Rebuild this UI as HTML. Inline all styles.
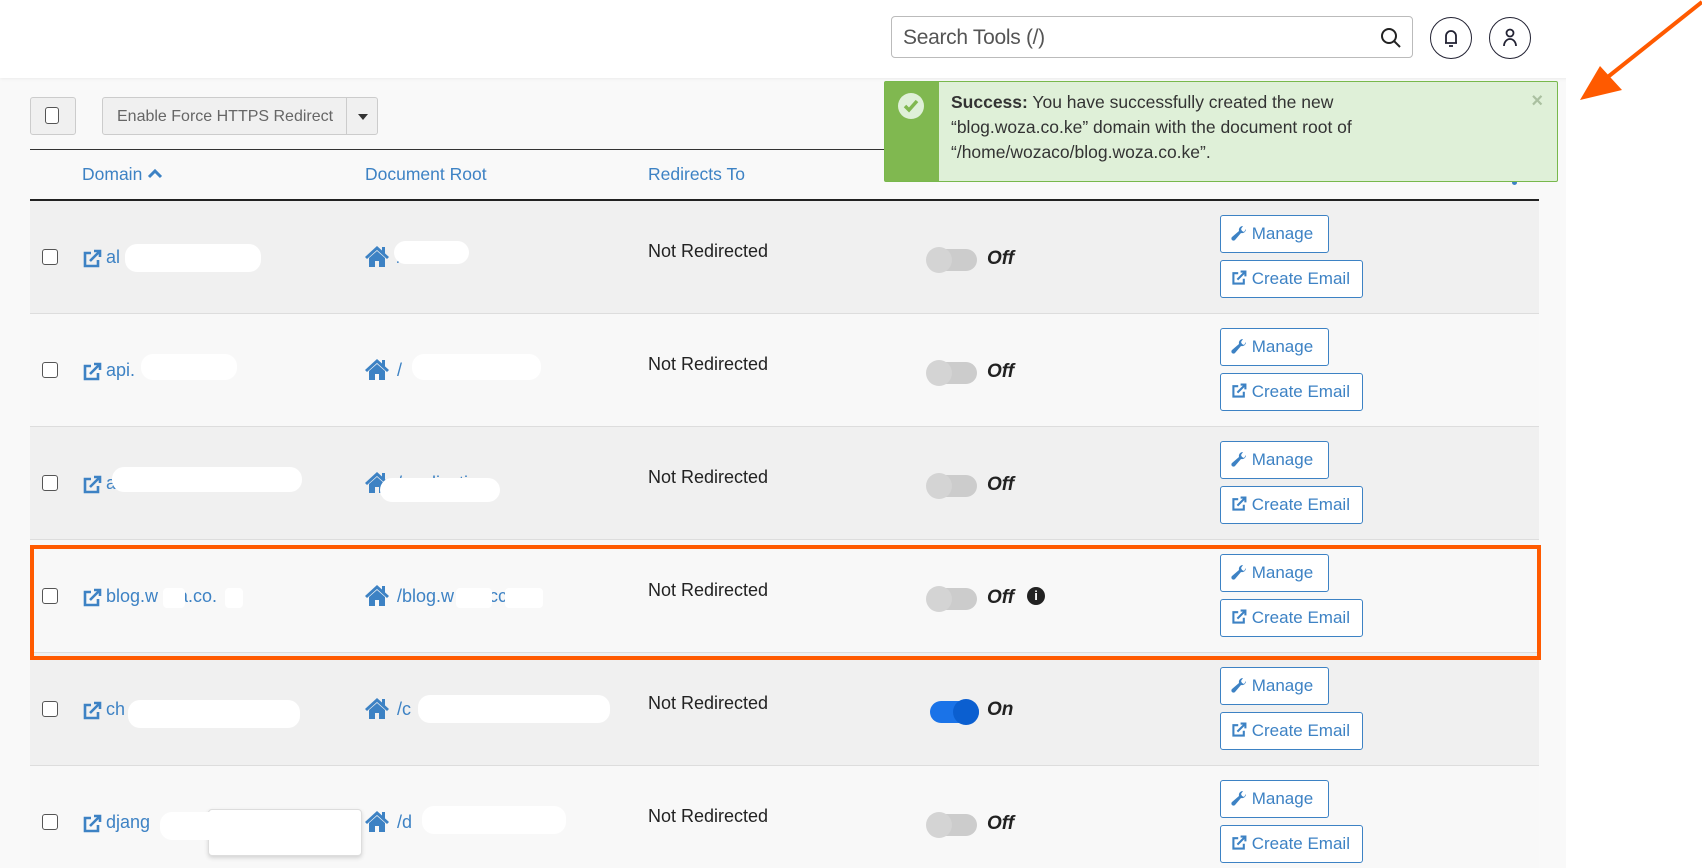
<!DOCTYPE html>
<html><head><meta charset="utf-8"><style>
*{box-sizing:border-box;margin:0;padding:0}
body{width:1702px;height:868px;overflow:hidden;background:#f9f9f9;font-family:"Liberation Sans",sans-serif;position:relative;color:#222}
.a{position:absolute}
.hdr{left:0;top:0;width:1702px;height:78px;background:#fff;box-shadow:0 1px 3px rgba(0,0,0,.06)}
.rw{left:1566px;top:78px;width:136px;height:790px;background:#fff}
.search{left:891px;top:16px;width:522px;height:42px;border:1px solid #bbb;border-radius:4px;background:#fff;font-size:21px;color:#555;padding:9px 11px;letter-spacing:-.3px}
.circ{width:42px;height:42px;border:1.5px solid #223;border-radius:50%;background:#fff}
.btn{background:#f0f0f0;border:1px solid #ccc;border-radius:3px}
.th{font-size:17.5px;color:#3d82c4;top:164px}
.row{left:30px;width:1509px;height:113px;border-bottom:1px solid #ddd}
.cb{width:16px;height:16px;border:1.5px solid #555;border-radius:3px;background:#fff}
.lnk{font-size:18px;color:#3d82c4}
.nr{font-size:18px;color:#222}
.tg{width:49px;height:22px;border-radius:11px;background:#ccc}
.tg i{position:absolute;left:-2px;top:-2px;width:26px;height:26px;border-radius:50%;background:#d4d4d4}
.off{font-size:19px;font-weight:bold;font-style:italic;color:#222}
.ob{background:#fff;border:1px solid #3d82c4;border-radius:3px;font-size:17px;color:#3d82c4;padding:8px 0 0 10px;height:38px}
.blob{background:#fff;border-radius:12px}
</style></head><body>
<div class="a hdr"></div>
<div class="a rw"></div>
<div class="a search">Search Tools (/)
<svg class="a" style="right:10px;top:10px" width="22" height="22" viewBox="0 0 22 22"><circle cx="9" cy="9" r="7" fill="none" stroke="#222" stroke-width="2"/><path d="M14 14l6 6" stroke="#222" stroke-width="2"/></svg></div>
<div class="a circ" style="left:1430px;top:17px"><svg width="40" height="40" viewBox="0 0 40 40"><path d="M14 25h12M15 25v-7a5 5 0 0110 0v7M18 28h4" fill="none" stroke="#223" stroke-width="1.8"/></svg></div>
<div class="a circ" style="left:1489px;top:17px"><svg width="40" height="40" viewBox="0 0 40 40"><circle cx="20" cy="15" r="3.5" fill="none" stroke="#223" stroke-width="1.8"/><path d="M14 28a6 7 0 0112 0" fill="none" stroke="#223" stroke-width="1.8"/></svg></div>

<div class="a btn" style="left:30px;top:97px;width:46px;height:38px"><div class="a cb" style="left:14px;top:9px;width:14px;height:17px"></div></div>
<div class="a btn" style="left:102px;top:97px;width:276px;height:38px;font-size:16px;color:#666;padding:10px 0 0 14px">Enable Force HTTPS Redirect
<div class="a" style="left:243px;top:0;width:1px;height:36px;background:#ccc"></div>
<div class="a" style="left:255px;top:16px;border:5px solid transparent;border-top:6px solid #333"></div></div>

<div class="a" style="left:30px;top:149px;width:1509px;height:1px;background:#333"></div>
<div class="a th" style="left:82px">Domain <svg width="16" height="12" style="vertical-align:1px"><path d="M2 10l6-6 6 6" fill="none" stroke="#3d82c4" stroke-width="3"/></svg></div>
<div class="a th" style="left:365px">Document Root</div>
<div class="a th" style="left:648px">Redirects To</div>
<div class="a" style="left:1512px;top:180px;width:5px;height:5px;border-radius:50%;background:#3d82c4"></div>
<div class="a" style="left:30px;top:199px;width:1509px;height:2px;background:#222"></div>

<div class="a row" style="top:201px;background:#f0f0f0"></div>
<div class="a row" style="top:314px;background:#f8f8f8"></div>
<div class="a row" style="top:427px;background:#f0f0f0"></div>
<div class="a row" style="top:540px;background:#f8f8f8"></div>
<div class="a row" style="top:653px;background:#f0f0f0"></div>
<div class="a row" style="top:766px;background:#f8f8f8;border:none;height:102px"></div>

<svg width="0" height="0" style="position:absolute"><defs>
<symbol id="ext" viewBox="0 0 20 20"><path d="M9 4H3v13h13v-6" fill="none" stroke="#3d82c4" stroke-width="2.6"/><path d="M8 12l9-9M12 2h6v6" fill="none" stroke="#3d82c4" stroke-width="2.6"/></symbol>
<symbol id="home" viewBox="0 0 26 24"><path d="M13 2L1 13l2 2 10-9 10 9 2-2-4-3.6V3h-3v3.5z" fill="#3d82c4"/><path d="M5 14l8-7 8 7v9h-6v-6h-4v6H5z" fill="#3d82c4"/></symbol>
<symbol id="wr" viewBox="0 0 16 16"><path d="M15 4a4 4 0 01-5 4L4 15a1.6 1.6 0 01-3-3l7-6a4 4 0 014-5l-2 3 1 2 2 1z" fill="#3d82c4"/></symbol>
</defs></svg>

<div id="rows"></div>
<script>
var tops=[201,314,427,540,653,766];
var dom=["al","api.","a","blog.w&nbsp;&nbsp;&nbsp;&nbsp;a.co.","ch","djang"];
var root=["/","/","/applicatio","/blog.w&nbsp;&nbsp;&nbsp;&nbsp;a.cc","/c","/d"];
var h="";
tops.forEach(function(t,i){
h+='<div class="a cb" style="left:42px;top:'+(t+48)+'px"></div>';
h+='<svg class="a" style="left:82px;top:'+(t+48)+'px" width="20" height="20"><use href="#ext"/></svg>';
h+='<div class="a lnk" style="left:106px;top:'+(t+46)+'px">'+dom[i]+'</div>';
h+='<svg class="a" style="left:364px;top:'+(t+43)+'px" width="26" height="24"><use href="#home"/></svg>';
h+='<div class="a lnk" style="left:397px;top:'+(t+46)+'px">'+root[i]+'</div>';
h+='<div class="a nr" style="left:648px;top:'+(t+40)+'px">Not Redirected</div>';
if(i==4){h+='<div class="a tg" style="left:930px;top:'+(t+48)+'px;background:#1a73e8"><i style="left:23px;background:#0b5fd0"></i></div><div class="a off" style="left:987px;top:'+(t+46)+'px">On</div>';}
else{h+='<div class="a tg" style="left:928px;top:'+(t+48)+'px"><i></i></div><div class="a off" style="left:987px;top:'+(t+47)+'px">Off</div>';}
h+='<div class="a ob" style="left:1220px;top:'+(t+14)+'px;width:109px"><svg width="16" height="16" style="vertical-align:-2px"><use href="#wr"/></svg> Manage</div>';
h+='<div class="a ob" style="left:1220px;top:'+(t+59)+'px;width:143px"><svg width="16" height="16" style="vertical-align:-2px"><use href="#ext"/></svg> Create Email</div>';
});
document.getElementById("rows").innerHTML=h;
</script>
<div class="a" style="left:1027px;top:587px;width:18px;height:18px;border-radius:50%;background:#222;color:#fff;font-size:13px;font-weight:bold;text-align:center;line-height:18px">i</div>

<div class="a blob" style="left:125px;top:244px;width:136px;height:28px"></div>
<div class="a blob" style="left:394px;top:241px;width:75px;height:23px"></div>
<div class="a blob" style="left:141px;top:354px;width:96px;height:26px"></div>
<div class="a blob" style="left:412px;top:354px;width:129px;height:26px"></div>
<div class="a blob" style="left:112px;top:467px;width:190px;height:25px"></div>
<div class="a blob" style="left:380px;top:478px;width:120px;height:24px"></div>
<div class="a blob" style="left:163px;top:588px;width:22px;height:20px;border-radius:4px"></div>
<div class="a blob" style="left:225px;top:588px;width:18px;height:20px;border-radius:4px"></div>
<div class="a blob" style="left:456px;top:588px;width:36px;height:20px;border-radius:4px"></div>
<div class="a blob" style="left:505px;top:588px;width:38px;height:20px;border-radius:4px"></div>
<div class="a blob" style="left:128px;top:700px;width:172px;height:28px"></div>
<div class="a blob" style="left:418px;top:695px;width:192px;height:28px"></div>
<div class="a" style="left:208px;top:809px;width:154px;height:47px;background:#fff;border:1px solid #ddd;border-radius:4px;box-shadow:0 2px 4px rgba(0,0,0,.15)"></div>
<div class="a blob" style="left:160px;top:812px;width:200px;height:28px"></div>
<div class="a blob" style="left:422px;top:806px;width:144px;height:28px"></div>

<div class="a" style="left:30px;top:545px;width:1511px;height:115px;border:4px solid #ff5a00"></div>

<div class="a" style="left:884px;top:81px;width:674px;height:101px;background:#dff0d8;border:1px solid #78b84c;border-radius:2px">
<div class="a" style="left:0;top:0;width:54px;height:99px;background:#80b850"></div>
<div class="a" style="left:13px;top:11px;width:26px;height:26px;border-radius:50%;background:#dff0d8"><svg width="26" height="26"><path d="M7 13l4 4 8-9" fill="none" stroke="#80b850" stroke-width="3.5"/></svg></div>
<div class="a" style="left:66px;top:8px;font-size:17.5px;line-height:25px;color:#333;width:560px">
<b>Success:</b> You have successfully created the new<br>“blog.woza.co.ke” domain with the document root of<br>“/home/wozaco/blog.woza.co.ke”.</div>
<div class="a" style="right:14px;top:8px;color:#aac0a0;font-size:20px;font-weight:bold">×</div>
</div>

<svg class="a" style="left:1570px;top:0" width="132" height="110"><path d="M132 2L34 80" stroke="#ff5a00" stroke-width="4"/><path d="M10 100L52 90 30 66z" fill="#ff5a00"/></svg>
</body></html>
